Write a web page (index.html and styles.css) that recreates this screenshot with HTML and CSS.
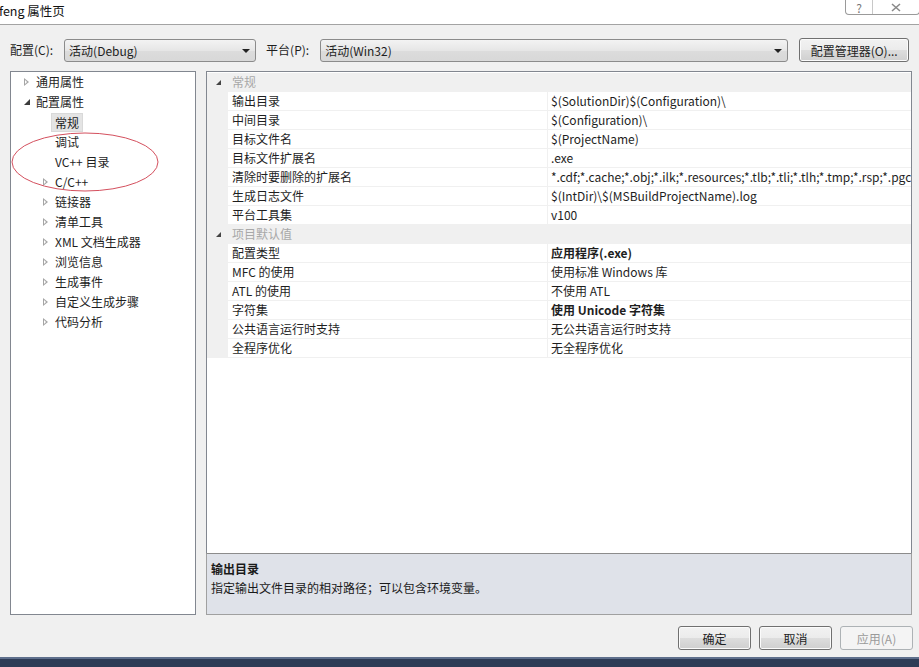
FILE: index.html
```html
<!DOCTYPE html>
<html lang="zh-CN">
<head>
<meta charset="utf-8">
<title>feng 属性页</title>
<link rel="stylesheet" href="styles.css">
</head>
<body>
<div class="window">
  <div class="titlebar">
    <span class="title">feng 属性页</span>
    <div class="caption-btns">
      <span class="cap help">?</span>
      <span class="cap close">
        <svg width="10" height="9" viewBox="0 0 10 9"><path d="M1 1 L9 8 M9 1 L1 8" stroke="#8a8a8a" stroke-width="1.6" fill="none"/></svg>
      </span>
    </div>
  </div>

  <div class="toolbar">
    <label class="lbl">配置(C):</label>
    <div class="combo combo-config"><span>活动(Debug)</span><i class="arrow"></i></div>
    <label class="lbl lbl-plat">平台(P):</label>
    <div class="combo combo-plat"><span>活动(Win32)</span><i class="arrow"></i></div>
    <button class="btn btn-mgr">配置管理器(O)...</button>
  </div>

  <div class="main">
    <div class="tree">
      <div class="node l0"><i class="tri"></i>通用属性</div>
      <div class="node l0"><i class="tri-filled"></i>配置属性</div>
      <div class="node l1"><span class="sel">常规</span></div>
      <div class="node l1">调试</div>
      <div class="node l1">VC++ 目录</div>
      <div class="node l1 exp"><i class="tri"></i>C/C++</div>
      <div class="node l1 exp"><i class="tri"></i>链接器</div>
      <div class="node l1 exp"><i class="tri"></i>清单工具</div>
      <div class="node l1 exp"><i class="tri"></i>XML 文档生成器</div>
      <div class="node l1 exp"><i class="tri"></i>浏览信息</div>
      <div class="node l1 exp"><i class="tri"></i>生成事件</div>
      <div class="node l1 exp"><i class="tri"></i>自定义生成步骤</div>
      <div class="node l1 exp"><i class="tri"></i>代码分析</div>
      <svg class="mark" width="150" height="62" viewBox="0 0 150 62"><ellipse cx="75" cy="31" rx="73" ry="29" fill="none" stroke="#d4505e" stroke-width="1"/></svg>
    </div>

    <div class="right">
      <div class="grid">
        <div class="cat"><span class="m"><i class="tri-filled sm"></i></span><span class="ct">常规</span></div>
        <div class="row"><span class="m"></span><span class="n">输出目录</span><span class="v">$(SolutionDir)$(Configuration)\</span></div>
        <div class="row"><span class="m"></span><span class="n">中间目录</span><span class="v">$(Configuration)\</span></div>
        <div class="row"><span class="m"></span><span class="n">目标文件名</span><span class="v">$(ProjectName)</span></div>
        <div class="row"><span class="m"></span><span class="n">目标文件扩展名</span><span class="v">.exe</span></div>
        <div class="row"><span class="m"></span><span class="n">清除时要删除的扩展名</span><span class="v">*.cdf;*.cache;*.obj;*.ilk;*.resources;*.tlb;*.tli;*.tlh;*.tmp;*.rsp;*.pgc;*.pgd;*.meta</span></div>
        <div class="row"><span class="m"></span><span class="n">生成日志文件</span><span class="v">$(IntDir)\$(MSBuildProjectName).log</span></div>
        <div class="row"><span class="m"></span><span class="n">平台工具集</span><span class="v">v100</span></div>
        <div class="cat"><span class="m"><i class="tri-filled sm"></i></span><span class="ct">项目默认值</span></div>
        <div class="row"><span class="m"></span><span class="n">配置类型</span><span class="v b">应用程序(.exe)</span></div>
        <div class="row"><span class="m"></span><span class="n">MFC 的使用</span><span class="v">使用标准 Windows 库</span></div>
        <div class="row"><span class="m"></span><span class="n">ATL 的使用</span><span class="v">不使用 ATL</span></div>
        <div class="row"><span class="m"></span><span class="n">字符集</span><span class="v b">使用 Unicode 字符集</span></div>
        <div class="row"><span class="m"></span><span class="n">公共语言运行时支持</span><span class="v">无公共语言运行时支持</span></div>
        <div class="row"><span class="m"></span><span class="n">全程序优化</span><span class="v">无全程序优化</span></div>
      </div>
      <div class="desc">
        <div class="desc-title">输出目录</div>
        <div class="desc-text">指定输出文件目录的相对路径；可以包含环境变量。</div>
      </div>
    </div>
  </div>

  <div class="footer">
    <button class="btn">确定</button>
    <button class="btn">取消</button>
    <button class="btn disabled">应用(A)</button>
  </div>
  <div class="taskbar"></div>
</div>
</body>
</html>
```

FILE: styles.css
```css
* { box-sizing: border-box; }
html, body { margin: 0; padding: 0; }
body {
  width: 919px; height: 667px; overflow: hidden;
  background: #f0f0f0;
  font-family: "Noto Sans CJK SC", "Microsoft YaHei", "Noto Sans", sans-serif;
  font-size: 12px;
  color: #1e1e1e;
}
.window { width: 919px; height: 667px; display: flex; flex-direction: column; }

.titlebar {
  height: 25px; background: #ffffff; border-bottom: 1px solid #a3a3a3;
  display: flex; justify-content: space-between; align-items: flex-start;
}
.title { font-size: 12.5px; line-height: 22px; margin-left: -1px; color: #111; }
.caption-btns {
  display: flex; height: 15px; margin-right: -1px;
  border: 1px solid #9a9a9a; border-top: none;
  border-radius: 0 0 4px 4px; background: #fff;
}
.cap { height: 14px; display: flex; align-items: center; justify-content: center; color: #777; }
.help { width: 27px; border-right: 1px solid #c8c8c8; font-size: 12px; line-height: 14px; padding-top: 1px; }
.close { width: 46px; }

.toolbar { display: flex; align-items: center; height: 24px; margin-top: 13px; padding-left: 10px; }
.lbl { line-height: 24px; }
.combo {
  height: 23px; border: 1px solid #8b8b8b; border-radius: 3px;
  background: linear-gradient(#f3f3f3, #e6e6e6 50%, #dcdcdc 51%, #d8d8d8);
  display: flex; align-items: center; justify-content: space-between;
  padding: 0 5px 0 4px;
}
.combo-config { width: 192px; margin-left: 11px; }
.lbl-plat { margin-left: 10px; }
.combo-plat { width: 468px; margin-left: 11px; }
.arrow { width: 0; height: 0; border-left: 4px solid transparent; border-right: 4px solid transparent; border-top: 4px solid #222; margin-top: 2px; }
.btn {
  font: inherit; color: #1e1e1e;
  height: 24px; width: 73px; padding: 0;
  border: 1px solid #707070; border-radius: 3px;
  background: linear-gradient(#f2f2f2, #ebebeb 50%, #dddddd 51%, #cfcfcf);
  box-shadow: inset 0 0 0 1px #fbfbfb;
}
.btn-mgr { width: 110px; margin-left: 11px; }
.btn.disabled { color: #9a9a9a; border-color: #adb2b5; background: #f4f4f4; box-shadow: none; }

.main { display: flex; margin-top: 9px; padding-left: 10px; gap: 10px; height: 544px; }

.tree {
  width: 186px; height: 544px; background: #fff; border: 1px solid #828790;
  position: relative;
}
.node { height: 20px; line-height: 20px; display: flex; align-items: center; white-space: nowrap; }
.node.l0 { padding-left: 13px; }
.node.l0 .tri, .node.l0 .tri-filled { margin-right: 7px; }
.node.l0 .tri-filled { margin-right: 6px; }
.node.l1 { padding-left: 44px; }
.node.l1.exp { padding-left: 32px; }
.node.exp .tri { margin-right: 7px; }
.tri {
  width: 0; height: 0; display: inline-block; flex: none;
  border-top: 4px solid transparent; border-bottom: 4px solid transparent;
  border-left: 5px solid #a6a6a6; position: relative;
}
.tri::after {
  content: ""; position: absolute; left: -4px; top: -2px;
  border-top: 2px solid transparent; border-bottom: 2px solid transparent;
  border-left: 2.5px solid #fff;
}
.tri-filled {
  width: 0; height: 0; display: inline-block; flex: none;
  border-left: 6px solid transparent; border-bottom: 6px solid #3c3c3c;
}
.tri-filled.sm { border-left-width: 5px; border-bottom-width: 5px; border-bottom-color: #444; }
.sel { background: #e4e4e4; border: 1px solid #d9d9d9; padding: 0 3px; margin-left: -4px; line-height: 17px; height: 19px; }
.mark { position: absolute; left: -1px; top: 59px; pointer-events: none; }

.right { width: 706px; display: flex; flex-direction: column; }
.grid {
  height: 482px; background: #fff; border: 1px solid #828790; border-bottom: none;
  padding-top: 1px; overflow: hidden;
}
.cat, .row { display: flex; height: 19px; line-height: 18px; white-space: nowrap; }
.cat { background: #f0f0f0; color: #a8a8a8; }
.m { width: 21px; flex: none; background: #f0f0f0; display: flex; align-items: center; justify-content: center; padding-left: 2px; }
.ct { padding-left: 4px; }
.n { width: 320px; flex: none; padding-left: 4px; border-bottom: 1px solid #f0f0f0; border-right: 1px solid #f0f0f0; }
.v { flex: 1; padding-left: 3px; border-bottom: 1px solid #f0f0f0; overflow: hidden; }
.v.b { font-weight: bold; }

.desc {
  height: 62px; background: #dfe2e9; border: 1px solid #a0a0a0; border-top: 1px solid #8c8c8c;
  padding: 5px 0 0 4px; line-height: 19px; color: #1a1a1a;
}
.desc-title { font-weight: bold; }

.footer { display: flex; justify-content: flex-end; gap: 8px; padding-right: 6px; margin-top: 11px; }
.taskbar { margin-top: auto; height: 10px; background: #2e3c56; border-top: 2px solid #5e6f8c; }
```
